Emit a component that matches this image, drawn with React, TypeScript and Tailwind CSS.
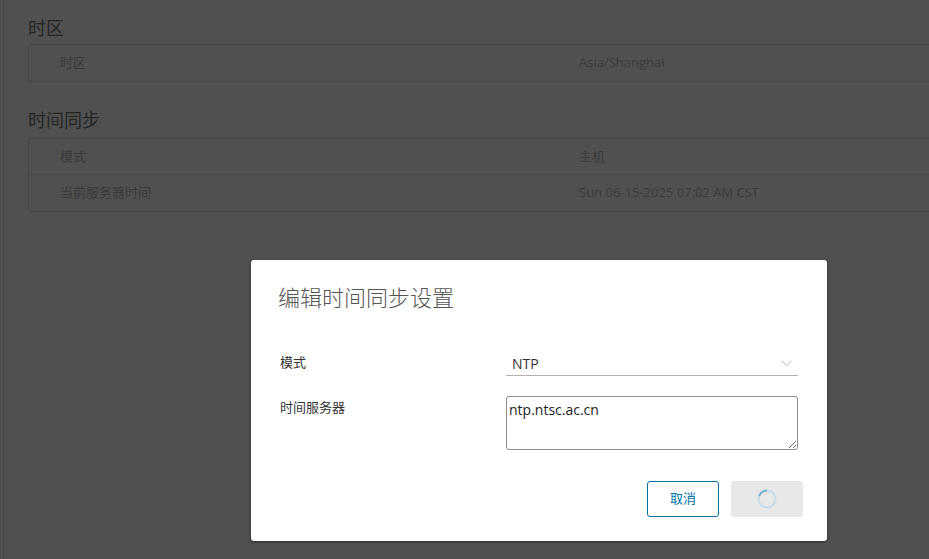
import React from 'react'

const font = { fontFamily: '"Open Sans", "Noto Sans CJK SC", sans-serif' }

const Row = ({ label, value, last }: { label: string; value: string; last?: boolean }) => (
  <div className={`flex h-[36px] items-center text-[13px] text-[#3b3b3b] ${last ? '' : 'border-b border-[#474747]'}`}>
    <div className="w-[550px] pl-[31px]">{label}</div>
    <div>{value}</div>
  </div>
)

export default function App() {
  return (
    <div className="relative h-[559px] w-[929px] overflow-hidden bg-[#505050]" style={font}>
      <div className="h-full border-l border-[#474747] ml-[3px] pl-[24px] pt-[16px]">
        <h2 className="text-[18px] leading-[24px] text-[#252525]">时区</h2>
        <div className="mt-[4px] rounded-[3px] border border-[#474747] w-[960px]">
          <Row label="时区" value="Asia/Shanghai" last />
        </div>
        <h2 className="mt-[26px] text-[18px] leading-[24px] text-[#252525]">时间同步</h2>
        <div className="mt-[6px] rounded-[3px] border border-[#474747] w-[960px]">
          <Row label="模式" value="主机" />
          <Row label="当前服务器时间" value="Sun 06-15-2025 07:02 AM CST" last />
        </div>
      </div>

      <div className="absolute left-[251px] top-[260px] h-[281px] w-[576px] rounded-[3px] bg-white shadow-[0_1px_3px_rgba(0,0,0,0.5)] px-[27px] pt-[22px]">
        <h3 className="text-[22px] font-light leading-[30px] text-[#555]">编辑时间同步设置</h3>

        <div className="mt-[40px] flex items-start">
          <label className="w-[228px] pl-[2px] text-[13px] leading-[20px] text-[#333]">模式</label>
          <div className="flex h-[24px] w-[292px] items-center justify-between border-b border-[#b3b3b3] pl-[6px] pr-[6px]">
            <span className="text-[14px] text-[#333]">NTP</span>
            <svg width="11" height="7" viewBox="0 0 11 7" fill="none" stroke="#b5b5b5" strokeWidth="1">
              <path d="M0.5 0.8 L5.5 5.8 L10.5 0.8" />
            </svg>
          </div>
        </div>

        <div className="mt-[20px] flex items-start">
          <label className="w-[228px] pl-[2px] pt-[1px] text-[13px] leading-[20px] text-[#333]">时间服务器</label>
          <textarea
            defaultValue="ntp.ntsc.ac.cn"
            className="h-[54px] w-[292px] rounded-[3px] border border-[#8c8c8c] px-[2px] py-[3px] text-[14px] leading-[20px] text-[#222] outline-none"
            style={font}
          />
        </div>

        <div className="mt-[31px] mr-[-3px] flex justify-end gap-[12px]">
          <button className="h-[36px] w-[72px] rounded-[3px] border border-[#0072a3] text-[13px] text-[#0072a3]">
            取消
          </button>
          <button className="flex h-[36px] w-[72px] items-center justify-center rounded-[3px] bg-[#e8e8e8]">
            <svg width="20" height="20" viewBox="0 0 20 20" fill="none">
              <circle cx="10" cy="10" r="8.5" stroke="#c6dcea" strokeWidth="2" />
              <path d="M10 1.5 A8.5 8.5 0 0 0 2.1 7" stroke="#7fb3d0" strokeWidth="2" />
            </svg>
          </button>
        </div>
      </div>
    </div>
  )
}
